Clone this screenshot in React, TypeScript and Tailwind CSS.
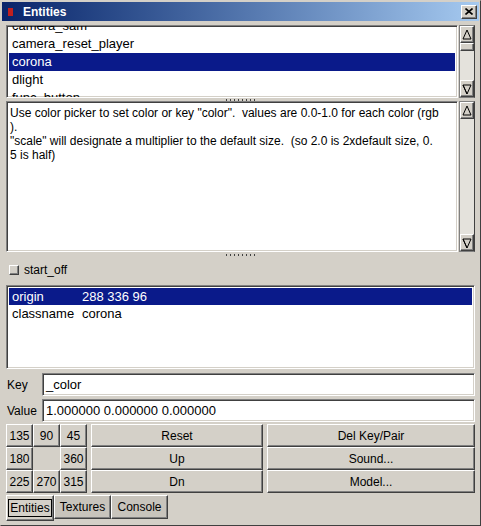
import React from "react";

const font = "font-['Liberation_Sans',Arial,sans-serif]";

const sunken =
  "border border-t-[#808080] border-l-[#808080] border-b-white border-r-white shadow-[inset_1px_1px_0_#404040,inset_-1px_-1px_0_#d4d0c8]";
const raised =
  "border border-t-white border-l-white border-b-[#404040] border-r-[#404040] shadow-[inset_-1px_-1px_0_#808080]";

function Arrow({ down }: { down?: boolean }) {
  return (
    <div className={`h-[17px] w-full bg-[#d4d0c8] ${raised} flex items-center justify-center`}>
      <svg width="10" height="12" viewBox="0 0 10 12">
        {down ? (
          <path d="M1 2 H9 L5 11 Z M1 2 L5 11" fill="none" stroke="#000" strokeWidth="1" />
        ) : (
          <path d="M5 1 L9 10 H1 Z" fill="none" stroke="#000" strokeWidth="1" />
        )}
      </svg>
    </div>
  );
}

function Scrollbar({ thumb }: { thumb?: boolean }) {
  return (
    <div className="w-[16px] flex flex-col bg-[#e4e2dc] border border-[#808080] border-r-[#404040]">
      <Arrow />
      {thumb && <div className={`h-[8px] bg-[#d4d0c8] ${raised}`} />}
      <div className="flex-1" />
      <Arrow down />
    </div>
  );
}

function Splitter({ h }: { h: string }) {
  return (
    <div className={`${h} flex items-center justify-center`}>
      <div className="flex gap-[3px]">
        {[0, 1, 2, 3, 4, 5, 6, 7].map((i) => (
          <span key={i} className="w-[1px] h-[2px] bg-[#404040]" />
        ))}
      </div>
    </div>
  );
}

const entities = ["camera_sam", "camera_reset_player", "corona", "dlight", "func_button"];

function Btn({ children, className = "" }: { children?: React.ReactNode; className?: string }) {
  return (
    <div className={`h-[23px] bg-[#d4d0c8] ${raised} flex items-center justify-center text-[12px] text-black ${className}`}>
      {children}
    </div>
  );
}

export default function App() {
  return (
    <div className={`w-[481px] h-[526px] bg-[#d4d0c8] ${font} text-[12px] text-black flex flex-col border border-t-[#d4d0c8] border-l-[#d4d0c8] border-b-[#404040] border-r-[#404040] overflow-hidden`}>
      {/* title bar */}
      <div className="mx-[1px] mt-[1px] h-[19px] flex items-center bg-gradient-to-r from-[#0a246a] to-[#a6caf0] pl-[6px] pr-[2px]">
        <span className="w-[5px] h-[8px] bg-[#c02020] mr-[10px]" />
        <span className="text-white font-bold text-[12px]">Entities</span>
        <div className={`ml-auto w-[16px] h-[14px] bg-[#d4d0c8] ${raised} flex items-center justify-center`}>
          <svg width="8" height="7" viewBox="0 0 8 7">
            <path d="M0.5 0.5 L7.5 6.5 M7.5 0.5 L0.5 6.5" stroke="#000" strokeWidth="1.6" />
          </svg>
        </div>
      </div>

      <div className="flex-1 flex flex-col pl-[5px] pr-[5px] pt-[4px]">
        {/* entity list */}
        <div className="h-[73px] flex gap-[1px]">
          <div className={`flex-1 bg-white ${sunken} overflow-hidden p-[2px] text-[13px]`}>
            <div className="-mt-[11px]">
              {entities.map((e) => (
                <div
                  key={e}
                  className={`h-[18px] leading-[18px] pl-[3px] ${e === "corona" ? "bg-[#0a1a8a] text-white" : ""}`}
                >
                  {e}
                </div>
              ))}
            </div>
          </div>
          <Scrollbar thumb />
        </div>

        <Splitter h="h-[3px]" />

        {/* description */}
        <div className="h-[151px] flex gap-[1px]">
          <div className={`flex-1 bg-white ${sunken} overflow-hidden px-[3px] pt-[4px]`}>
            <div className="whitespace-pre leading-[14px] text-[12px]">
              {'Use color picker to set color or key "color".  values are 0.0-1.0 for each color (rgb\n).\n"scale" will designate a multiplier to the default size.  (so 2.0 is 2xdefault size, 0.\n5 is half)'}
            </div>
          </div>
          <Scrollbar />
        </div>

        <Splitter h="h-[5px]" />

        {/* checkbox */}
        <div className="h-[28px] flex items-center pl-[3px] gap-[5px] pb-[2px]">
          <span className={`w-[10px] h-[10px] bg-[#d4d0c8] ${raised}`} />
          <span>start_off</span>
        </div>

        {/* key/value list */}
        <div className={`h-[84px] bg-white ${sunken} p-[2px] text-[13px]`}>
          <div className="h-[17px] leading-[17px] bg-[#0a1a8a] text-white flex pl-[3px]">
            <span className="w-[70px]">origin</span>
            <span>288 336 96</span>
          </div>
          <div className="h-[18px] leading-[18px] flex pl-[3px]">
            <span className="w-[70px]">classname</span>
            <span>corona</span>
          </div>
        </div>

        {/* key */}
        <div className="mt-[4px] h-[23px] flex items-center">
          <span className="w-[36px] pl-[1px]">Key</span>
          <div className={`flex-1 h-full bg-white ${sunken} flex items-center pl-[3px] text-[13px]`}>_color</div>
        </div>
        <div className="mt-[3px] h-[23px] flex items-center">
          <span className="w-[36px] pl-[1px]">Value</span>
          <div className={`flex-1 h-full bg-white ${sunken} flex items-center pl-[3px] text-[13px]`}>
            1.000000 0.000000 0.000000
          </div>
        </div>

        {/* buttons */}
        <div className="mt-[2px] flex gap-[4px]">
          <div className="w-[81px] grid grid-cols-3">
            <Btn>135</Btn>
            <Btn>90</Btn>
            <Btn>45</Btn>
            <Btn>180</Btn>
            <div className="h-[23px]" />
            <Btn>360</Btn>
            <Btn>225</Btn>
            <Btn>270</Btn>
            <Btn>315</Btn>
          </div>
          <div className="w-[172px] flex flex-col">
            <Btn>Reset</Btn>
            <Btn>Up</Btn>
            <Btn>Dn</Btn>
          </div>
          <div className="flex-1 flex flex-col">
            <Btn>Del Key/Pair</Btn>
            <Btn>Sound...</Btn>
            <Btn>Model...</Btn>
          </div>
        </div>

        {/* tabs */}
        <div className="mt-[2px] flex items-start">
          <div className={`w-[48px] h-[26px] bg-[#d4d0c8] ${raised} flex items-center justify-center`}>
            <span className="border border-black px-[1px] leading-[16px]">Entities</span>
          </div>
          <div className={`w-[57px] h-[24px] bg-[#c8c4bc] ${raised} flex items-center justify-center`}>Textures</div>
          <div className={`w-[57px] h-[24px] bg-[#c8c4bc] ${raised} flex items-center justify-center`}>Console</div>
        </div>
      </div>
    </div>
  );
}
